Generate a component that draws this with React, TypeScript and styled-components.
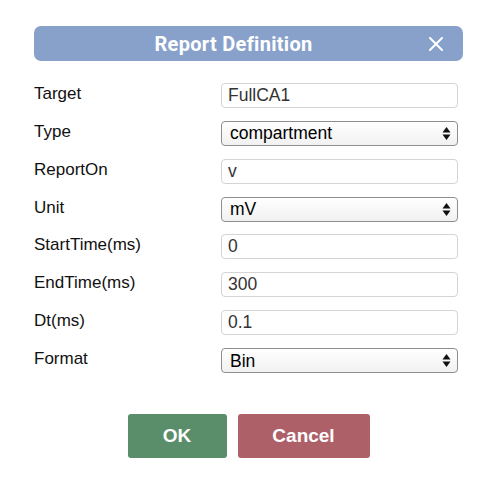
import React from "react";
import styled, { createGlobalStyle } from "styled-components";

const GlobalStyle = createGlobalStyle`
  html, body {
    margin: 0;
    padding: 0;
    background: #ffffff;
  }
  body {
    font-family: "Liberation Sans", Arial, sans-serif;
  }
`;

type Field =
    | { label: string; kind: "input"; value: string }
    | { label: string; kind: "select"; value: string; options: string[] };

const fields: Field[] = [
    { label: "Target", kind: "input", value: "FullCA1" },
    { label: "Type", kind: "select", value: "compartment", options: ["compartment", "summation"] },
    { label: "ReportOn", kind: "input", value: "v" },
    { label: "Unit", kind: "select", value: "mV", options: ["mV", "nA"] },
    { label: "StartTime(ms)", kind: "input", value: "0" },
    { label: "EndTime(ms)", kind: "input", value: "300" },
    { label: "Dt(ms)", kind: "input", value: "0.1" },
    { label: "Format", kind: "select", value: "Bin", options: ["Bin", "HDF5"] },
];

const SelectArrows = () => (
    <ArrowIcon width="9" height="15" viewBox="0 0 9 15">
        <path d="M4.5 1 L8.5 6.5 L0.5 6.5 Z" fill="#111" />
        <path d="M4.5 14 L8.5 8.5 L0.5 8.5 Z" fill="#111" />
    </ArrowIcon>
);

export default function App() {
    return (
        <>
            <GlobalStyle />
            <Dialog>
                <Header>
                    <Title>Report Definition</Title>
                    <CloseButton aria-label="close">
                        <svg width="14" height="14" viewBox="0 0 14 14">
                            <path d="M1 1 L13 13 M13 1 L1 13" stroke="#fff" strokeWidth="2" strokeLinecap="round" />
                        </svg>
                    </CloseButton>
                </Header>

                <Form>
                    {fields.map((f) => (
                        <Row key={f.label}>
                            <Label>{f.label}</Label>
                            {f.kind === "input" ? (
                                <TextInput defaultValue={f.value} />
                            ) : (
                                <SelectWrap>
                                    <Select defaultValue={f.value}>
                                        {f.options.map((o) => (
                                            <option key={o}>{o}</option>
                                        ))}
                                    </Select>
                                    <SelectArrows />
                                </SelectWrap>
                            )}
                        </Row>
                    ))}
                </Form>

                <Actions>
                    <Button $tone="ok" $width={99}>OK</Button>
                    <Button $tone="cancel" $width={132}>Cancel</Button>
                </Actions>
            </Dialog>
        </>
    );
}

const Dialog = styled.div`
  width: 429px;
  padding: 26px 36px 20px 34px;
`;

const Header = styled.div`
  height: 35px;
  display: flex;
  align-items: center;
  background: #88a1cb;
  border-radius: 7px;
  padding-right: 20px;
`;

const Title = styled.div`
  flex: 1;
  text-align: center;
  padding-left: 4px;
  font-family: Roboto, "Liberation Sans", sans-serif;
  font-weight: 700;
  font-size: 20px;
  letter-spacing: 0.3px;
  color: #ffffff;
`;

const CloseButton = styled.button`
  width: 14px;
  height: 14px;
  padding: 0;
  border: none;
  background: none;
  display: flex;
  cursor: pointer;
`;

const Form = styled.div`
  margin-top: 22px;
  display: flex;
  flex-direction: column;
  gap: 12.86px;
`;

const Row = styled.div`
  display: grid;
  grid-template-columns: 187px 237px;
  height: 25px;
`;

const Label = styled.div`
  align-self: start;
  font-size: 17px;
  line-height: 22px;
  color: #111;
`;

const TextInput = styled.input`
  box-sizing: border-box;
  width: 100%;
  height: 25px;
  padding: 0 6px;
  border: 1px solid #d4d4d4;
  border-radius: 4px;
  font-family: "Liberation Sans", Arial, sans-serif;
  font-size: 17.5px;
  color: #333;
  background: #fff;
  outline: none;
`;

const SelectWrap = styled.div`
  position: relative;
  height: 25px;
`;

const Select = styled.select`
  appearance: none;
  -webkit-appearance: none;
  box-sizing: border-box;
  width: 100%;
  height: 25px;
  padding: 0 24px 0 8px;
  border: 1px solid #8e8e8e;
  border-radius: 4px;
  background: linear-gradient(#ffffff, #f1f1f1);
  font-family: "Liberation Sans", Arial, sans-serif;
  font-size: 17.5px;
  color: #000;
  outline: none;
`;

const ArrowIcon = styled.svg`
  position: absolute;
  right: 7px;
  top: 5px;
  pointer-events: none;
`;

const Actions = styled.div`
  margin-top: 41px;
  display: flex;
  justify-content: center;
  gap: 11px;
`;

const Button = styled.button<{ $tone: "ok" | "cancel"; $width: number }>`
  width: ${(p) => p.$width}px;
  height: 44px;
  border: none;
  border-radius: 3px;
  background: ${(p) => (p.$tone === "ok" ? "#5a8e6a" : "#ad6068")};
  color: #fff;
  font-family: "Liberation Sans", Arial, sans-serif;
  font-weight: 700;
  font-size: 19px;
  cursor: pointer;
`;
